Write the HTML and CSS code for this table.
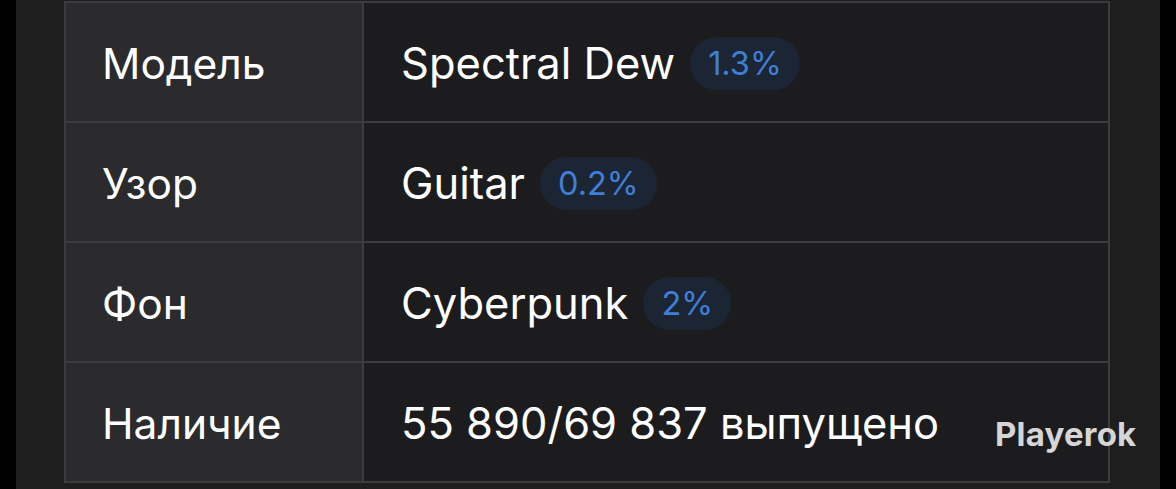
FILE: index.html
```html
<!DOCTYPE html>
<html lang="ru">
<head>
<meta charset="utf-8">
<link rel="stylesheet" href="styles.css">
</head>
<body>
<div class="screen">
  <div class="panel">
    <div class="table">
      <div class="row">
        <div class="key">Модель</div>
        <div class="val"><span class="name">Spectral Dew</span><span class="badge">1.3%</span></div>
      </div>
      <div class="row">
        <div class="key">Узор</div>
        <div class="val"><span class="name">Guitar</span><span class="badge">0.2%</span></div>
      </div>
      <div class="row">
        <div class="key">Фон</div>
        <div class="val"><span class="name">Cyberpunk</span><span class="badge">2%</span></div>
      </div>
      <div class="row">
        <div class="key">Наличие</div>
        <div class="val"><span class="name">55 890/69 837 выпущено</span></div>
      </div>
    </div>
  </div>
  <div class="watermark">Playerok</div>
</div>
</body>
</html>
```
FILE: styles.css
```css
* { box-sizing: border-box; }
html, body { margin: 0; padding: 0; background: #000; }
body { width: 1176px; height: 489px; overflow: hidden; font-family: Inter, "Noto Sans", sans-serif; }
.screen { position: relative; padding: 0 16px; height: 489px; }
.panel { background: #1e1e1e; height: 489px; padding: 1px 50px 0 48px; }
.table { border: 2px solid #3c3c3e; border-bottom: none; }
.row { display: grid; grid-template-columns: 298px 1fr; height: 120px; border-bottom: 2px solid #3c3c3e; }
.key { background: #2b2b2d; border-right: 2px solid #3c3c3e; display: flex; align-items: center; padding-left: 36px; color: #fff; font-size: 42.5px; padding-top: 2px; }
.val { background: #1c1c1e; display: flex; align-items: center; gap: 15px; padding-left: 37px; color: #fff; font-size: 43.5px; padding-top: 2px; }
.badge { background: #1b2533; color: #3f7fd8; font-size: 32.5px; height: 53px; padding: 0 18px; border-radius: 27px; display: flex; align-items: center; }
.watermark { position: absolute; left: 995px; top: 414px; color: #d6d6d6; font-weight: 700; font-size: 33px; letter-spacing: 0.2px; }
```
